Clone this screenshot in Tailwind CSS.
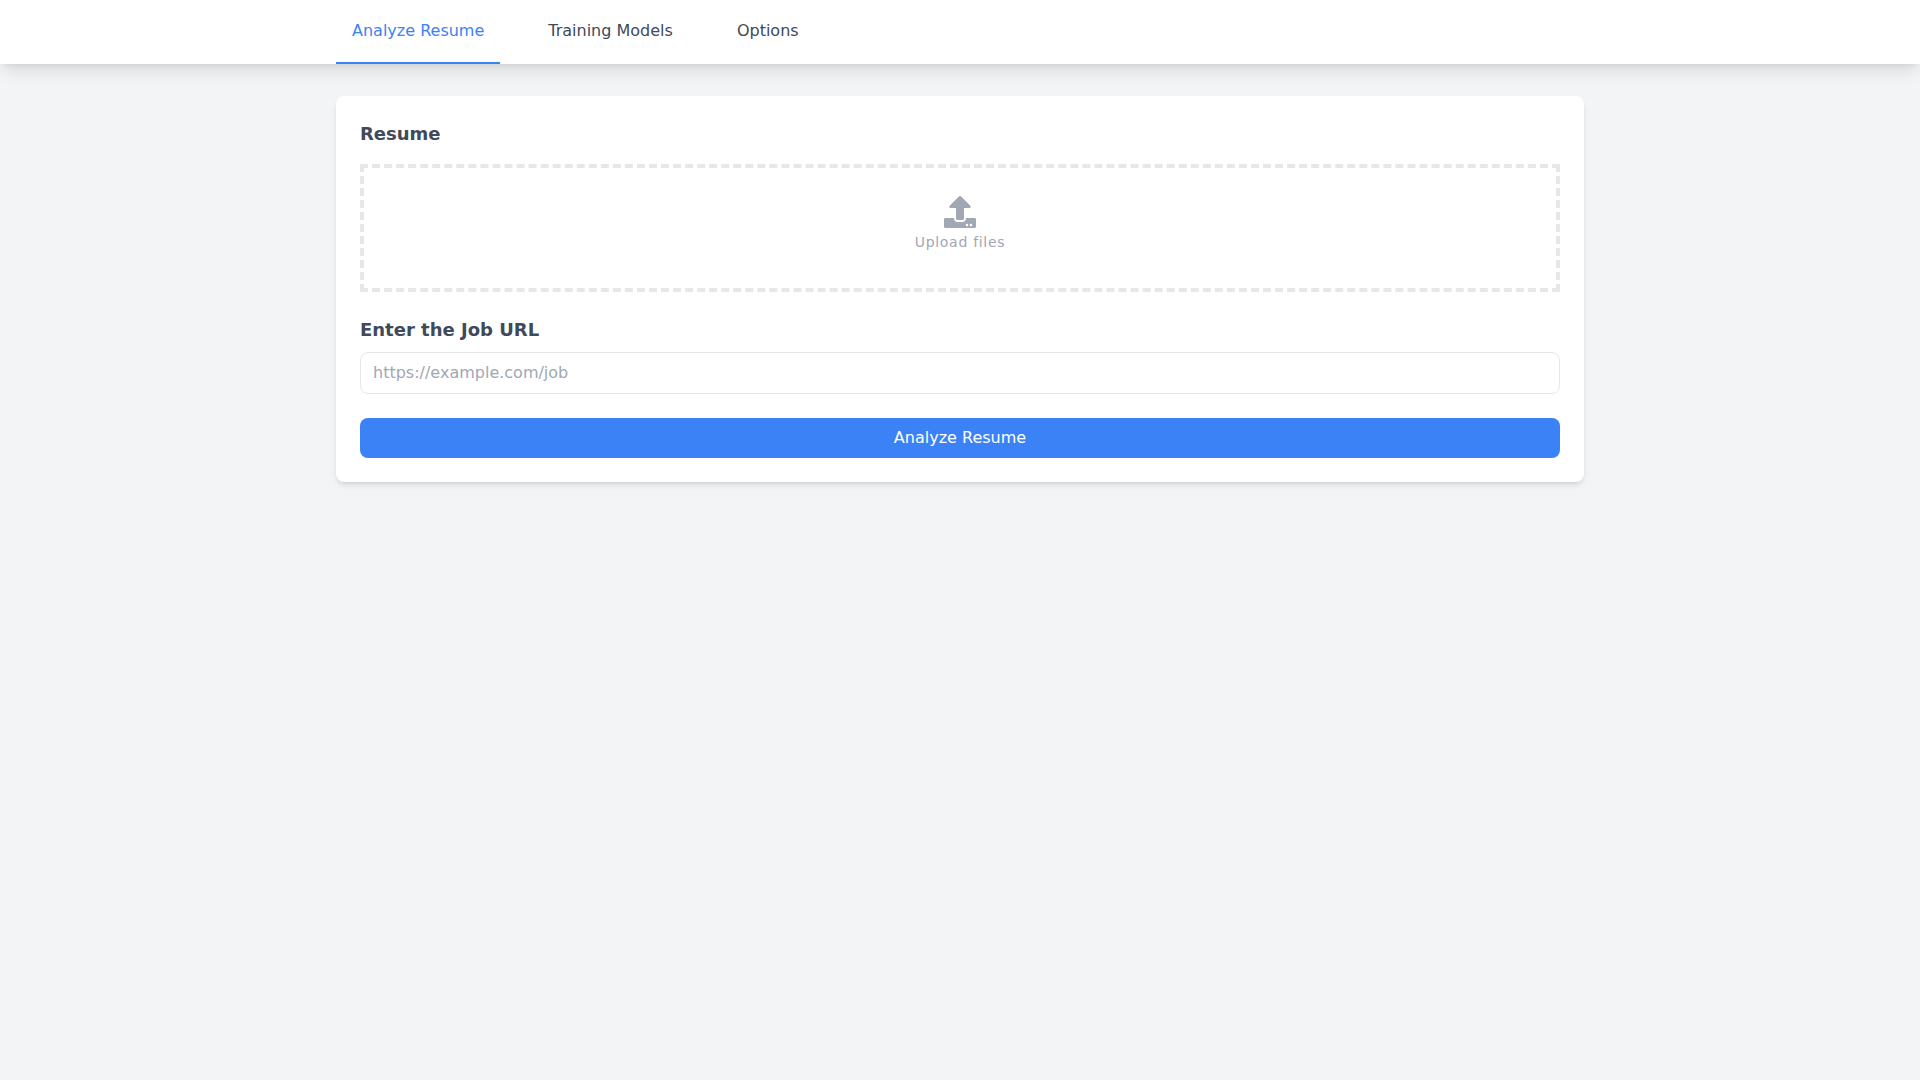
<!DOCTYPE html>
<html lang="en">
<head>
    <meta charset="UTF-8">
    <meta name="viewport" content="width=device-width, initial-scale=1.0">
    <title>Resume Analyzer</title>
    <script src="https://cdn.jsdelivr.net/npm/@tailwindcss/browser@4"></script>
</head>
<body class="bg-[#f3f4f6] text-[#404a59] font-['DejaVu_Sans',sans-serif] min-h-screen">

    <!-- Tabs -->
    <header class="bg-white shadow-lg">
        <nav class="max-w-7xl mx-auto px-4 flex gap-8 h-16">
            <a href="#analyze" class="flex items-center px-4 border-b-2 border-[#3b82f6] text-[#3b82f6]">Analyze Resume</a>
            <a href="#models" class="flex items-center px-4 border-b-2 border-transparent hover:text-[#3b82f6]">Training Models</a>
            <a href="#options" class="flex items-center px-4 border-b-2 border-transparent hover:text-[#3b82f6]">Options</a>
        </nav>
    </header>

    <main class="max-w-7xl mx-auto px-4 pt-8">
        <form id="analyzeForm" class="bg-white rounded-lg shadow-md p-6">
            <h2 class="text-lg font-bold mb-4">Resume</h2>
            <label for="resumeFile" class="flex flex-col items-center w-full h-32 pt-7 border-4 border-dashed border-[#e6e7e9] text-[#a1a7b3] cursor-pointer hover:bg-gray-50">
                <svg class="w-8 h-8" viewBox="0 0 512 512" fill="currentColor" aria-hidden="true">
                    <path d="M296 384h-80c-13.3 0-24-10.7-24-24V192h-87.7c-17.8 0-26.7-21.5-14.1-34.1L242.3 5.7c7.5-7.5 19.8-7.5 27.3 0l152.2 152.2c12.6 12.6 3.7 34.1-14.1 34.1H320v168c0 13.3-10.7 24-24 24zm216-8v112c0 13.3-10.7 24-24 24H24c-13.3 0-24-10.7-24-24V376c0-13.3 10.7-24 24-24h136v8c0 30.9 25.1 56 56 56h80c30.9 0 56-25.1 56-56v-8h136c13.3 0 24 10.7 24 24zm-124 88c0-11-9-20-20-20s-20 9-20 20 9 20 20 20 20-9 20-20zm64 0c0-11-9-20-20-20s-20 9-20 20 9 20 20 20 20-9 20-20z"/>
                </svg>
                <span id="fileName" class="pt-1 text-sm tracking-wider">Upload files</span>
                <input type="file" id="resumeFile" class="sr-only">
            </label>

            <label for="jobUrl" class="block text-lg font-bold mt-6 mb-2">Enter the Job URL</label>
            <input type="url" id="jobUrl" placeholder="https://example.com/job" class="block w-full px-3 py-2 border border-[#e6e7e9] rounded-lg placeholder:text-[#a1a7b3]">

            <button type="submit" class="block w-full mt-6 py-2 rounded-lg bg-[#3b82f6] hover:bg-[#2563eb] text-white">Analyze Resume</button>
        </form>
    </main>

    <script>
        const resumeFile = document.getElementById('resumeFile');
        const fileName = document.getElementById('fileName');

        // Show the chosen file in the drop area
        resumeFile.addEventListener('change', () => {
            fileName.textContent = resumeFile.files.length ? resumeFile.files[0].name : 'Upload files';
        });

        document.getElementById('analyzeForm').addEventListener('submit', (e) => {
            e.preventDefault();
        });
    </script>
</body>
</html>
